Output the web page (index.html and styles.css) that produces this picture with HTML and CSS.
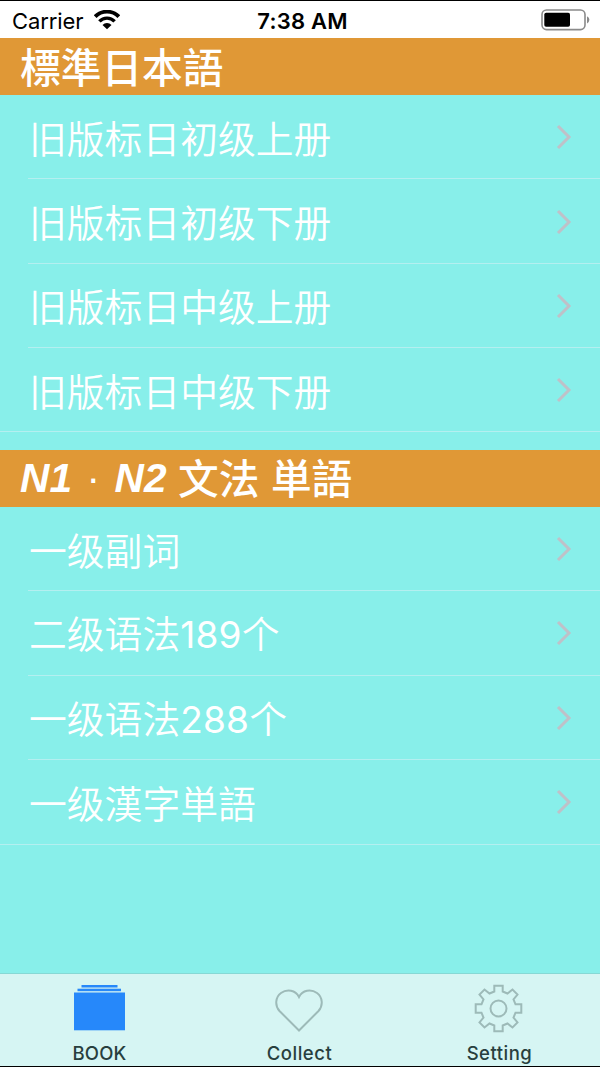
FILE: index.html
```html
<!DOCTYPE html>
<html lang="zh">
<head>
  <meta charset="UTF-8">
  <meta name="viewport" content="width=device-width, initial-scale=1.0">
  <title>BOOK</title>
  <link rel="stylesheet" href="styles.css">
</head>
<body>
  <div class="screen">
    <header class="status-bar">
      <div class="carrier">
        <span class="carrier-name">Carrier</span>
        <svg class="wifi" viewBox="0 0 26 20" width="26" height="20">
          <path d="M1.2 6.6 A16.5 16.5 0 0 1 24.8 6.6" fill="none" stroke="#000" stroke-width="3.8"/>
          <path d="M5.4 11.4 A10.4 10.4 0 0 1 20.6 11.4" fill="none" stroke="#000" stroke-width="3.4"/>
          <path d="M13 19.2 L8.5 14.9 A6.2 6.2 0 0 1 17.5 14.9 Z"/>
        </svg>
      </div>
      <span class="time">7:38 AM</span>
      <svg class="battery" viewBox="0 0 50 22" width="50" height="22">
        <rect x="1" y="1" width="43" height="19.6" rx="4.5" fill="none" stroke="#8a8a8a" stroke-width="1.6"/>
        <rect x="3.3" y="3.8" width="25.7" height="14" rx="1.8"/>
        <path d="M46 7.2 Q48.4 8.6 48.4 10.8 Q48.4 13 46 14.4 Z" fill="#8a8a8a"/>
      </svg>
    </header>

    <main class="book-list">
      <section class="group">
        <h2 class="group-title"><span class="kanji">標準日本語</span></h2>
        <ul class="rows">
          <li class="row"><span>旧版标日初级上册</span><svg class="arrow" viewBox="0 0 16 26"><path d="M2 2 L13 13 L2 24"/></svg></li>
          <li class="row"><span>旧版标日初级下册</span><svg class="arrow" viewBox="0 0 16 26"><path d="M2 2 L13 13 L2 24"/></svg></li>
          <li class="row"><span>旧版标日中级上册</span><svg class="arrow" viewBox="0 0 16 26"><path d="M2 2 L13 13 L2 24"/></svg></li>
          <li class="row"><span>旧版标日中级下册</span><svg class="arrow" viewBox="0 0 16 26"><path d="M2 2 L13 13 L2 24"/></svg></li>
        </ul>
      </section>

      <section class="group grammar">
        <h2 class="group-title"><em>N1</em><span class="dot">·</span><em>N2</em><span class="kanji">文法</span><span class="kanji">単語</span></h2>
        <ul class="rows">
          <li class="row"><span>一级副词</span><svg class="arrow" viewBox="0 0 16 26"><path d="M2 2 L13 13 L2 24"/></svg></li>
          <li class="row"><span>二级语法<span class="num">189</span>个</span><svg class="arrow" viewBox="0 0 16 26"><path d="M2 2 L13 13 L2 24"/></svg></li>
          <li class="row"><span>一级语法<span class="num">288</span>个</span><svg class="arrow" viewBox="0 0 16 26"><path d="M2 2 L13 13 L2 24"/></svg></li>
          <li class="row"><span>一级漢字単語</span><svg class="arrow" viewBox="0 0 16 26"><path d="M2 2 L13 13 L2 24"/></svg></li>
        </ul>
      </section>
    </main>

    <nav class="tab-bar">
      <a class="tab active">
        <svg class="tab-icon" viewBox="-26 -25 52 50">
          <rect x="-18.5" y="-24" width="36" height="2.5"/>
          <rect x="-22.5" y="-20.3" width="43.5" height="2.5"/>
          <rect x="-26" y="-16.5" width="51" height="37.8"/>
        </svg>
        <span>BOOK</span>
      </a>
      <a class="tab">
        <svg class="tab-icon" viewBox="-26 -25 52 50">
          <path d="M-1 21.5 L-20.5 2 C-25.5 -3.5 -24.5 -12 -19 -16 C-13 -20.3 -4.5 -19 -1 -12 C2.5 -19 11 -20.3 17 -16 C22.5 -12 23.5 -3.5 18.5 2 Z"/>
        </svg>
        <span>Collect</span>
      </a>
      <a class="tab">
        <svg class="tab-icon" viewBox="-26 -25 52 50">
          <circle cx="-1.5" cy="-.5" r="8"/>
          <path transform="translate(-1.5 -.5)" d="M-4.2 -17 V-22.8 H4.2 V-17 L9 -15 L14 -19 L19 -14 L15 -9 L17 -4.2 H22.8 V4.2 H17 L15 9 L19 14 L14 19 L9 15 L4.2 17 V22.8 H-4.2 V17 L-9 15 L-14 19 L-19 14 L-15 9 L-17 4.2 H-22.8 V-4.2 H-17 L-15 -9 L-19 -14 L-14 -19 L-9 -15 Z"/>
        </svg>
        <span>Setting</span>
      </a>
    </nav>
  </div>
</body>
</html>
```
FILE: styles.css
```css
* {
  box-sizing: border-box;
}

body {
  margin: 0;
  font-family: Inter, "Noto Sans CJK SC", sans-serif;
}

.screen {
  display: flex;
  flex-direction: column;
  width: 600px;
  height: 1067px;
  overflow: hidden;
  background-color: #88efea;
  border-top: 1px solid #000;
  border-bottom: 1px solid #000;
}

/* status bar */
.status-bar {
  display: grid;
  grid-template-columns: 1fr auto 1fr;
  align-items: center;
  height: 37px;
  padding: 0 9px 0 12px;
  background-color: #fff;
  font-size: 22px;
  line-height: 36px;
}

.carrier {
  display: flex;
  align-items: center;
  gap: 11px;
}

.carrier-name {
  padding-top: 2px;
  letter-spacing: -0.1px;
}

.time {
  padding: 2px 0 0 2px;
  font-weight: 600;
  letter-spacing: 0.2px;
}

.battery {
  justify-self: end;
}

/* list */
.book-list {
  flex: 1;
}

.group {
  margin-bottom: 18px;
}

.group-title {
  display: flex;
  height: 57px;
  margin: 0;
  padding-left: 20px;
  background-color: #e09836;
  color: #fff;
  font-family: "Liberation Sans", "Noto Sans CJK JP", sans-serif;
  font-size: 40.7px;
  font-weight: 700;
  line-height: 57px;
}

.grammar .group-title {
  height: 56.5px;
}

.kanji {
  font-family: "Noto Sans CJK JP", sans-serif;
  font-weight: 500;
  line-height: 55px;
}

.grammar .kanji {
  margin-left: 11.5px;
  line-height: 54px;
}

.dot {
  width: 42.5px;
  font-weight: 400;
  text-align: center;
}

.rows {
  margin: 0;
  padding: 0;
  list-style: none;
  border-bottom: 1px solid #b4eff0;
}

.row {
  display: flex;
  align-items: center;
  justify-content: space-between;
  height: 84.4px;
  margin-left: 28px;
  padding: 4px 28px 0 1px;
  border-bottom: 1px solid #b4eff0;
  color: #fff;
  font-size: 37.8px;
  font-weight: 350;
  line-height: 80px;
}

.row:last-child {
  height: 83.2px;
  border-bottom: none;
}

.grammar .row:last-child {
  height: 83.6px;
}

.num {
  font-size: 37px;
  font-weight: 400;
  letter-spacing: 0.2px;
}

.arrow {
  width: 16px;
  height: 26px;
  margin-bottom: 3px;
  fill: none;
  stroke: #bfc1c8;
  stroke-width: 3;
}

/* tab bar */
.tab-bar {
  display: grid;
  grid-template-columns: repeat(3, 1fr);
  height: 93px;
  border-top: 1px solid #86d8d4;
  background-color: #d6f5f3;
}

.tab {
  display: flex;
  flex-direction: column;
  align-items: center;
  padding: 10px 1px 0 0;
  color: #283f3e;
  font-size: 18.5px;
  font-weight: 500;
  line-height: 22px;
  letter-spacing: 0.5px;
}

.active {
  letter-spacing: 0.2px;
}

.tab-icon {
  width: 52px;
  height: 50px;
  margin-bottom: 8px;
  fill: none;
  stroke: #9dbab8;
  stroke-width: 2;
}

.active .tab-icon {
  fill: #2688fa;
  stroke: none;
}
```
